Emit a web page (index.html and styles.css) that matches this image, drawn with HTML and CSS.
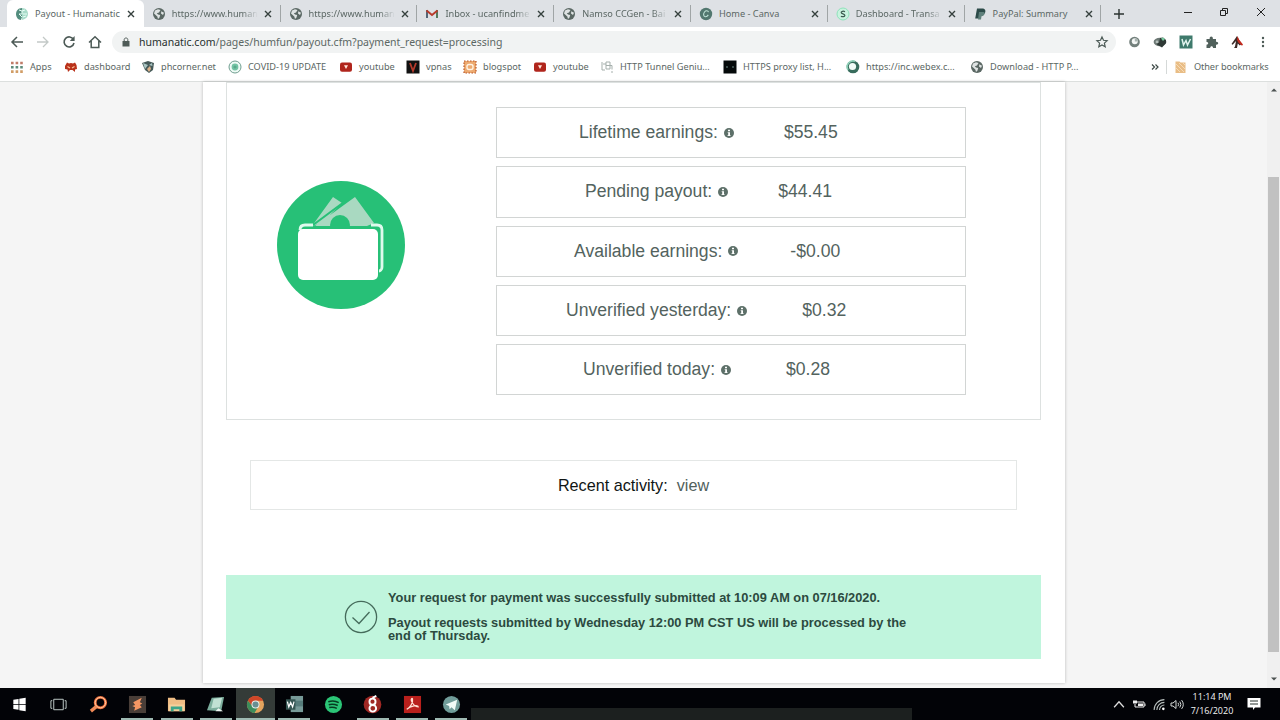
FILE: index.html
```html
<!DOCTYPE html>
<html lang="en">
<head>
    <meta charset="UTF-8">
    <meta name="viewport" content="width=device-width, initial-scale=1.0">
    <title>Payout - Humanatic</title>
    <link rel="stylesheet" href="styles.css">
</head>
<body>
    <svg class="symbols">
        <symbol id="globe" viewBox="0 0 14 14"><circle cx="7" cy="7" r="6" fill="#5b6864"/><path d="M3 3.5 6 2.2 8.5 3 7 5.5 4.8 6.3 6 7.5 8.2 8 7.5 10.5 6 12 5.3 9.5 2 6.5zM9.3 4.2 12 5.8 11 8 9 6.5z" fill="#dfe3e3"/></symbol>
        <symbol id="youtube" viewBox="0 0 14 14"><rect x="1" y="2.4" width="12" height="9.4" rx="2" fill="#b0251c"/><path d="M5 5.300h4L7 9z" fill="#ffe7dc"/></symbol>
        <symbol id="close" viewBox="0 0 10 10"><path d="M2 2 8 8M8 2 2 8" stroke="#35403d" stroke-width="1.4"/></symbol>
        <symbol id="info" viewBox="0 0 10 10"><circle cx="5" cy="5" r="5" fill="#5d7069"/><path d="M4 1.800h2v1.400H4zM3.700 4.200H6v3h.6V8H3.500v-.8h.7V5h-.5z" fill="#fff"/></symbol>
    </svg>
    <div class="tabs">
        <div class="tab active">
            <svg class="icon" viewBox="0 0 14 14"><path d="M7 1C3 1 1 4 1 7s2 6 5 6l1-3z" fill="#538d7e"/><path d="M7 1c4 0 6 3 6 6s-2 5-6 6z" fill="#a9dbc9"/><path d="M4 3l3 1v3H4l3 3M7 4l3-1M8 7h4M8 10l3-1" fill="none" stroke="#e8fff6"/></svg>
            <span class="title">Payout - Humanatic</span>
            <svg class="close"><use href="#close"/></svg>
        </div>
        <div class="tab">
            <svg class="icon"><use href="#globe"/></svg>
            <span class="title fade">https://www.human</span>
            <svg class="close"><use href="#close"/></svg>
        </div>
        <div class="tab">
            <svg class="icon"><use href="#globe"/></svg>
            <span class="title fade">https://www.human</span>
            <svg class="close"><use href="#close"/></svg>
        </div>
        <div class="tab">
            <svg class="icon" viewBox="0 0 14 14"><path d="M1 3h2v8H1z" fill="#567"/><path d="M11 3h2v8h-2z" fill="#567a5c"/><path d="M1.500 3.500 7 8l5.500-4.500" fill="none" stroke="#b93c2c" stroke-width="2"/></svg>
            <span class="title fade">Inbox - ucanfindme</span>
            <svg class="close"><use href="#close"/></svg>
        </div>
        <div class="tab">
            <svg class="icon"><use href="#globe"/></svg>
            <span class="title fade">Namso CCGen - Bai</span>
            <svg class="close"><use href="#close"/></svg>
        </div>
        <div class="tab">
            <svg class="icon" viewBox="0 0 14 14"><circle cx="7" cy="7" r="6.200" fill="#52776f"/><path d="M9.500 5.200C9 3.500 6.800 3.300 5.500 5c-1.400 1.900-1.200 4.600.8 4.700 1.300.1 2.400-.8 3-1.800" fill="none" stroke="#bfe3d7" stroke-width="1.100"/></svg>
            <span class="title">Home - Canva</span>
            <svg class="close"><use href="#close"/></svg>
        </div>
        <div class="tab">
            <svg class="icon" viewBox="0 0 14 14"><circle cx="7" cy="7" r="6" fill="#c9f3df" stroke="#8fe3bb"/><path d="M9 4.700C7.500 3.800 5 4.200 5.200 5.600 5.400 7 8.900 6.700 8.900 8.400 8.800 9.900 6.300 10 4.900 9.200" fill="none" stroke="#3c5c50" stroke-width="1.200"/></svg>
            <span class="title fade">Dashboard - Transa</span>
            <svg class="close"><use href="#close"/></svg>
        </div>
        <div class="tab">
            <svg class="icon" viewBox="0 0 14 14"><path d="M4 1.500h5c3 0 4 2 3 4.200S9.500 8.500 7.500 8.500L7 11.500H2.200z" fill="#2c4b49"/><path d="M6 5h4.500c2 0 1.500 4-2 4.300L8 12.500H5z" fill="#5f807b"/></svg>
            <span class="title">PayPal: Summary</span>
            <svg class="close"><use href="#close"/></svg>
        </div>
        <svg class="plus" viewBox="0 0 12 12"><path d="M6 1v10M1 6h10" stroke="#2b3331" stroke-width="1.400"/></svg>
        <div class="window-buttons">
            <svg viewBox="0 0 10 10"><path d="M1 5.500h8" stroke="#222"/></svg>
            <svg viewBox="0 0 10 10"><path d="M1.500 3.500h5v5h-5zM3.500 3.500v-2h5v5h-2" fill="none" stroke="#222"/></svg>
            <svg viewBox="0 0 10 10"><path d="M1 1 9 9M9 1 1 9" stroke="#222"/></svg>
        </div>
    </div>

    <div class="toolbar">
        <div class="nav">
            <svg viewBox="0 0 14 14"><path d="M13 7H2M7 2 2 7l5 5" fill="none" stroke="#4c5a56" stroke-width="1.500"/></svg>
            <svg viewBox="0 0 14 14"><path d="M1 7h11M7 2l5 5-5 5" fill="none" stroke="#c3c9c7" stroke-width="1.300"/></svg>
            <svg viewBox="0 0 14 14"><path d="M11.500 4.500A5 5 0 1 0 12 8" fill="none" stroke="#4c5a56" stroke-width="1.600"/><path d="M12.600 1v5H7.800z" fill="#4c5a56"/></svg>
            <svg viewBox="0 0 14 14"><path d="M1 7.500 7 1.700l6 5.800M3.200 6v6.500h7.600V6" fill="none" stroke="#4c5a56" stroke-width="1.500"/></svg>
        </div>
        <div class="address">
            <svg class="lock" viewBox="0 0 8 10"><path d="M.5 4h7v5.500h-7z" fill="#505c58"/><path d="M2.200 4V2.500c0-2 3.600-2 3.600 0V4" fill="none" stroke="#505c58"/></svg>
            <span class="url"><b>humanatic.com</b>/pages/humfun/payout.cfm?payment_request=processing</span>
            <svg class="star" viewBox="0 0 14 14"><path d="m7 2 1.500 3.300 3.600.4-2.700 2.400.8 3.600L7 9.900l-3.200 1.800.8-3.600-2.700-2.400 3.600-.4z" fill="none" stroke="#4c5a56" stroke-width="1.200"/></svg>
        </div>
        <div class="extensions">
            <svg viewBox="0 0 14 14"><circle cx="6.500" cy="7" r="5.300" fill="#73807c"/><circle cx="6.800" cy="6.300" r="3" fill="#f4f6f5"/><path d="M6.800 6.500V3.500a3 3 0 0 1 3 3z" fill="#a9b4b0"/></svg>
            <svg viewBox="0 0 14 14"><ellipse cx="7" cy="7" rx="6.400" ry="4.200" fill="#6d7975"/><path d="M3 7 6 8l1-5 3-.5 3 2.500v3l-4 4.500-5-3z" fill="#2f3936"/><path d="m8 3.500 2-1 2 1.500-2 2z" fill="#77c99e"/><circle cx="4" cy="7" r="1.400" fill="#b5bfbb"/></svg>
            <svg viewBox="0 0 14 14"><path d="M.5.500h13v13H.5z" fill="#3f7a6c"/><path d="M3 4l1.500 6L7 5.500 8.500 10 11.500 4" fill="none" stroke="#e2f4ee" stroke-width="1.500"/></svg>
            <svg viewBox="0 0 14 14"><path d="M1.500 4h3.200c-.7-3.200 3.600-3.400 3.200 0H11v2.800c3-.3 2.900 3.200 0 2.900V13H8c.2-2.300-2.900-2.300-2.800 0H1.500V9.800c2.300 0 2.300-2.700 0-2.700z" fill="#51615c"/></svg>
            <svg viewBox="0 0 14 14"><path d="M7 1 5 4 1.500 9l1.200.7L6 6l-1 5.500-1 1.500h3l.8-4.500 2 2L11.500 9l-3-5z" fill="#3b2a27"/><path d="m7.500 1 1.500 3.500 4 5-1 1.200-3.500-3L7 5z" fill="#c4291d"/></svg>
            <svg viewBox="0 0 14 14"><g fill="#4c5a56"><circle cx="7" cy="3" r="1.200"/><circle cx="7" cy="7" r="1.200"/><circle cx="7" cy="11" r="1.200"/></g></svg>
        </div>
    </div>

    <div class="bookmarks">
        <div class="bookmark apps"><svg class="icon" viewBox="0 0 14 14"><path d="M1 3h12" stroke="#c07c69" stroke-width="2.600" stroke-dasharray="2.600 2"/><path d="M1 7.300h12" stroke="#5d8c7c" stroke-width="2.600" stroke-dasharray="2.600 2"/><path d="M1 11.600h12" stroke="#d19d66" stroke-width="2.600" stroke-dasharray="2.600 2"/></svg><span>Apps</span></div>
        <div class="bookmark dash"><svg class="icon" viewBox="0 0 14 14"><path d="M1 6 3 2.500l2 1L7 3l2 .500 2-1L12.500 5l.5 4-2 .500V12l-2.500-2H6l-2 2-.5-2.500L1 9z" fill="#ba321b"/><path d="M3.500 6.500 6 8M10.500 6.500 8 8" stroke="#ffc49b" stroke-width="1.100"/></svg><span>dashboard</span></div>
        <div class="bookmark phc"><svg class="icon" viewBox="0 0 14 14"><path d="M1 3 7 1l6 2-1 7-4 3-4-3z" fill="#465a59"/><path d="m2 3 5 2-3 4zM8 5l3-2 .5 3z" fill="#a9c5c3"/><path d="M6 9l3-3 1 3-2 3z" fill="#ddb28a"/></svg><span>phcorner.net</span></div>
        <div class="bookmark covid"><svg class="icon" viewBox="0 0 14 14"><circle cx="7" cy="7" r="6" fill="#effbf6" stroke="#709e90"/><circle cx="7" cy="7" r="3.400" fill="#73c4a4"/><circle cx="7" cy="7" r="1.600" fill="#58a88b"/></svg><span>COVID-19 UPDATE</span></div>
        <div class="bookmark yt"><svg class="icon"><use href="#youtube"/></svg><span>youtube</span></div>
        <div class="bookmark vpnas"><svg class="icon" viewBox="0 0 14 14"><path d="M.5.500h13v13H.5z" fill="#111"/><path d="m4 3 3 8 3-8" fill="none" stroke="#b53a2b" stroke-width="1.800"/></svg><span>vpnas</span></div>
        <div class="bookmark blog"><svg class="icon" viewBox="0 0 14 14"><rect x="1" y="1" width="12" height="12" fill="#edaa70"/><rect x="1" y="1" width="12" height="12" fill="none" stroke="#b95526" stroke-width="1.200" stroke-dasharray="1.500 1.500"/><rect x="4" y="4.500" width="6" height="5" rx="2" fill="none" stroke="#fff3e5" stroke-width="1.400"/></svg><span>blogspot</span></div>
        <div class="bookmark yt"><svg class="icon"><use href="#youtube"/></svg><span>youtube</span></div>
        <div class="bookmark tunnel"><svg class="icon" viewBox="0 0 14 14"><path d="M2 2v8h3M6 2h4v7H6zM6 5.500h6v4M3 4h3M12 11v2" fill="none" stroke="#a5afac"/></svg><span>HTTP Tunnel Geniu...</span></div>
        <div class="bookmark proxy"><svg class="icon" viewBox="0 0 14 14"><path d="M.5.500h13v13H.5z" fill="#05090a"/><path d="M3 7h2M9 7h2" stroke="#6c8b87"/></svg><span>HTTPS proxy list, H...</span></div>
        <div class="bookmark webex"><svg class="icon" viewBox="0 0 14 14"><circle cx="7" cy="7" r="6.300" fill="#376c5c"/><path d="M2 10A6 6 0 0 1 9 1.200" fill="none" stroke="#8fd0b8" stroke-width="1.600"/><circle cx="6.500" cy="6.500" r="3.600" fill="#f1fbf7"/></svg><span>https://inc.webex.c...</span></div>
        <div class="bookmark download"><svg class="icon"><use href="#globe"/></svg><span>Download - HTTP P...</span></div>
        <svg class="more" viewBox="0 0 8 8"><path d="m1 1.500 2.500 2.500L1 6.500M4.500 1.500 7 4 4.500 6.500" fill="none" stroke="#3d4946" stroke-width="1.200"/></svg>
        <div class="bookmark other"><svg class="icon" viewBox="0 0 14 14"><path d="M1.500 1.500h4l1 1h5V13h-10z" fill="#e9bd85"/><path d="m2 4 8 8M2 8l4 4M5 3l6 6M9 3l2 2" stroke="#f6dbb8"/></svg><span>Other bookmarks</span></div>
    </div>

    <div class="viewport">
        <div class="sheet">
            <div class="earnings">
                <svg class="wallet" viewBox="0 0 128 128">
                    <circle cx="64" cy="64" r="64" fill="#27c077"/>
                    <path d="M35 45 56 16l9 6-20 20zM38 45 78 16l19 26-7 3z" fill="#a9d9c1"/>
                    <path d="M36 44 67 21" stroke="#27c077" stroke-width="2"/>
                    <circle cx="63" cy="44" r="10" fill="#27c077"/>
                    <path d="M23 49c0-4 2-5 5-5h8M94 44h6c4 0 5 2 5 5v37c0 3-2 4-3 4" fill="none" stroke="#dffaed" stroke-width="2.800"/>
                    <rect x="21" y="48" width="80" height="51" rx="5" fill="#fff"/>
                </svg>
                <div class="rows">
                    <div class="row lifetime"><span>Lifetime earnings:</span><svg><use href="#info"/></svg><span class="amount">$55.45</span></div>
                    <div class="row pending"><span>Pending payout:</span><svg><use href="#info"/></svg><span class="amount">$44.41</span></div>
                    <div class="row available"><span>Available earnings:</span><svg><use href="#info"/></svg><span class="amount">-$0.00</span></div>
                    <div class="row yesterday"><span>Unverified yesterday:</span><svg><use href="#info"/></svg><span class="amount">$0.32</span></div>
                    <div class="row today"><span>Unverified today:</span><svg><use href="#info"/></svg><span class="amount">$0.28</span></div>
                </div>
            </div>
            <div class="activity">Recent activity:<a>view</a></div>
            <div class="notice">
                <svg viewBox="0 0 34 34"><circle cx="17" cy="17" r="15.600" fill="none" stroke="#456b5b" stroke-width="1.300"/><path d="m8.500 17.500 6.500 6L25.500 12" fill="none" stroke="#456b5b" stroke-width="1.300"/></svg>
                <div>
                    <p class="first">Your request for payment was successfully submitted at 10:09 AM on 07/16/2020.</p>
                    <p class="second">Payout requests submitted by Wednesday 12:00 PM CST US will be processed by the<br>end of Thursday.</p>
                </div>
            </div>
        </div>
        <div class="scrollbar">
            <svg viewBox="0 0 8 6"><path d="M1 4.500 4 1.500l3 3z" fill="#4b5150"/></svg>
            <div class="thumb"></div>
            <svg viewBox="0 0 8 6"><path d="M1 1.500h6l-3 3z" fill="#4b5150"/></svg>
        </div>
    </div>

    <div class="taskbar">
        <div class="app"><svg viewBox="0 0 20 20"><path d="m3.500 5 5.500-.8v5.300H3.500zM9.800 4 16.500 3v6.500H9.800zM3.500 10.300H9v5.300l-5.500-.8zM9.800 10.300h6.700V17l-6.700-1z" fill="#fff"/></svg></div>
        <div class="app"><svg viewBox="0 0 20 20"><path d="M5 4.500h10v11H5zM3.500 6H2v8h1.500M16.500 6H18v8h-1.500" fill="none" stroke="#c5d1ce"/></svg></div>
        <div class="app"><svg viewBox="0 0 20 20"><circle cx="12" cy="8" r="5.500" fill="none" stroke="#ef7040" stroke-width="3"/><path d="m8 12-6 5" stroke="#f18a57" stroke-width="3.500"/><circle cx="12" cy="8" r="5.500" fill="none" stroke="#ffd0a0"/></svg></div>
        <div class="app open"><svg viewBox="0 0 20 20"><path d="M1 1h18v18H1z" fill="#493e38"/><path d="m14.500 3-9 4.500 2 3-3 1 3 1.500-1 3.500 8-3.500-2-2.500 2.500-1.500-2.500-1.500z" fill="#f59663"/></svg></div>
        <div class="app open"><svg viewBox="0 0 20 20"><path d="M1 3h7l1.500 2H19v12H1z" fill="#efbd85"/><path d="M2 10h16v7H2z" fill="#f5d09c"/><path d="M4 17v-5h12v5h-3v-2H7v2z" fill="#3ba58a"/></svg></div>
        <div class="app open"><svg viewBox="0 0 20 20"><path d="M6 3 19 2l-3 15-15-1z" fill="#7cae9d"/><path d="m8 4 9-1-2.500 10-9 1z" fill="#c1e1d4"/><path d="m13 14 5 3h-8z" fill="#f1f7f4"/></svg></div>
        <div class="app open current"><svg viewBox="0 0 20 20"><circle cx="10" cy="10" r="9" fill="#e3a45e"/><path d="M2 6a9 9 0 0 1 16 0h-8L7 12z" fill="#d04628"/><path d="M2 6a9 9 0 0 0 7 13l4-7H7z" fill="#3c8d5b"/><circle cx="10" cy="10" r="4.200" fill="#e8efeb"/><circle cx="10" cy="10" r="3.200" fill="#688f91"/></svg></div>
        <div class="app open"><svg viewBox="0 0 20 20"><path d="M6 1h13v17H6z" fill="#779a98"/><path d="M6 6h13v6H6z" fill="#567c7b"/><path d="M1 4.500h10v11H1z" fill="#355653"/><path d="m2.500 7 1.500 5.500L6 8l2 4.500L9.500 7" fill="none" stroke="#fff" stroke-width="1.300"/></svg></div>
        <div class="app"><svg viewBox="0 0 20 20"><circle cx="10" cy="10" r="9" fill="#2bc576"/><path d="M4.500 7c4-1.200 8-.8 11 1M5 10.200c3.500-1 6.500-.5 9.500.9M5.500 13.200c3-.7 5.500-.4 8 .9" fill="none" stroke="#063b21" stroke-width="1.600"/></svg></div>
        <div class="app open"><svg viewBox="0 0 20 20"><circle cx="10" cy="10" r="9.300" fill="#9f2824"/><circle cx="10" cy="7" r="3.200" fill="none" stroke="#fff" stroke-width="2"/><circle cx="10.300" cy="14" r="3.500" fill="none" stroke="#fff" stroke-width="2"/><path d="M10 3 14 1" stroke="#fff" stroke-width="2"/></svg></div>
        <div class="app open"><svg viewBox="0 0 20 20"><path d="M1 1h18v18H1z" fill="#b9201c"/><path d="M4 15c3-1 7-7 6-11-.5-1-2 0-1 2.500 1 3 4 6 7 6 0-2.500-8-1-12 2.500z" fill="none" stroke="#ffdfd2" stroke-width="1.300"/></svg></div>
        <div class="app open"><svg viewBox="0 0 20 20"><circle cx="10" cy="10" r="9" fill="#719d9a"/><path d="m4 10 12-5-2.500 11-3.500-3-2 2-.5-3.500z" fill="#f1fbf8"/></svg></div>
        <div class="shade"></div>
        <div class="tray">
            <svg class="chevron" viewBox="0 0 12 12"><path d="m1.500 8.500 4.500-5 4.500 5" fill="none" stroke="#ddd" stroke-width="1.200"/></svg>
            <svg class="battery" viewBox="0 0 14 12"><path d="M5 3.500h7v5H3v-3" fill="none" stroke="#eee"/><path d="M6 5h5v2.500H6zM12.500 5h1v2.500h-1zM1 2h4v3H1z" fill="#eee"/></svg>
            <svg class="wifi" viewBox="0 0 12 12"><path d="M1.500 11A9.500 9.500 0 0 1 11 1.500M4 11a7 7 0 0 1 7-7M6.500 11A4.500 4.500 0 0 1 11 6.500" fill="none" stroke="#b7bfbd"/><circle cx="10" cy="10" r="1.200" fill="#fff"/></svg>
            <svg class="sound" viewBox="0 0 14 12"><path d="M1 4.500h2L6 2v8L3 7.500H1zM8 4.300q1.300 1.700 0 3.400M9.800 3q2.200 3 0 6M11.600 1.600q3.400 4.400 0 8.800" fill="none" stroke="#d5dad8"/></svg>
            <div class="clock"><div class="time">11:14 PM</div><div>7/16/2020</div></div>
            <svg class="action" viewBox="0 0 14 14"><path d="M.5 1h13v9.500H8L6 13v-2.500H.5z" fill="#fff"/><path d="M3 4h8M3 7h8" stroke="#26302d"/></svg>
        </div>
    </div>
</body>
</html>
```

FILE: styles.css
```css
* {
    box-sizing: border-box;
}
body {
    margin: 0;
    width: 1280px;
    height: 720px;
    overflow: hidden;
    display: flex;
    flex-direction: column;
    font-family: "Noto Sans", "Open Sans", sans-serif;
    font-size: 9.2px;
    color: #5b6764;
    background: #fff;
}
svg {
    display: block;
    flex: none;
}
.symbols {
    display: none;
}
.icon {
    width: 14px;
    height: 14px;
}

/* Tab strip */
.tabs {
    display: flex;
    height: 27px;
    padding-left: 7px;
    background: #dee1e5;
}
.tab {
    display: flex;
    align-items: center;
    width: 136.8px;
    padding-left: 8px;
    border-right: 1px solid #a3a8a9;
    border-image: linear-gradient(transparent 22%, #a0a5a6 22%, #a0a5a6 78%, transparent 78%) 1;
}
.tab.active {
    background: #fff;
    border: 0;
    border-radius: 6px 6px 0 0;
}
.title {
    width: 86px;
    margin-left: 6px;
    white-space: nowrap;
}
.fade {
    -webkit-mask-image: linear-gradient(90deg, #000 82%, transparent 100%);
}
.close {
    width: 10px;
    height: 10px;
    margin-left: 5px;
}
.plus {
    width: 12px;
    height: 12px;
    margin: 8px 0 0 12px;
}
.window-buttons {
    display: flex;
    gap: 26.7px;
    margin: 7px 14px 0 auto;
}
.window-buttons svg {
    width: 10px;
    height: 10px;
}

/* Address bar */
.toolbar {
    display: flex;
    align-items: center;
    height: 29px;
    padding: 0 10px;
}
.nav {
    display: flex;
    gap: 12px;
    width: 102px;
}
.nav svg {
    width: 14px;
    height: 14px;
}
.address {
    display: flex;
    align-items: center;
    width: 1004px;
    height: 22px;
    padding: 0 7px 0 10px;
    border-radius: 11px;
    background: #f1f3f3;
}
.lock {
    width: 8px;
    height: 10px;
}
.url {
    margin-left: 9px;
    font-size: 10.5px;
}
.url b {
    font-weight: normal;
    color: #27312e;
}
.star {
    width: 14px;
    height: 14px;
    margin-left: auto;
}
.extensions {
    display: flex;
    gap: 11.7px;
    margin-left: 12px;
}
.extensions svg {
    width: 14px;
    height: 14px;
}

/* Bookmarks bar */
.bookmarks {
    display: flex;
    align-items: center;
    height: 26px;
    padding: 0 0 4px 10px;
    border-bottom: 1px solid #dcdfde;
}
.bookmark {
    display: flex;
    gap: 6px;
    align-items: center;
    white-space: nowrap;
}
.apps { width: 54px; }
.dash { width: 77px; }
.phc { width: 87px; }
.covid { width: 111px; }
.yt { width: 67px; }
.vpnas { width: 57px; }
.blog { width: 70px; }
.tunnel { width: 123px; }
.proxy { width: 123px; }
.webex { width: 124px; }
.download { width: 181px; }
.more {
    width: 8px;
    height: 8px;
}
.other {
    margin-left: 7px;
    padding-left: 7px;
    border-left: 1px solid #d5d9d8;
    letter-spacing: -0.1px;
}

/* Page */
.viewport {
    display: flex;
    height: 606px;
    background: #f5f5f5;
    font-family: "Liberation Sans", Arial, sans-serif;
}
.sheet {
    width: 862px;
    height: 601px;
    margin-left: 203px;
    padding: 0 24px 0 23px;
    background: #fff;
    box-shadow: 0 0 3px rgba(0, 0, 0, 0.25);
}
.earnings {
    display: flex;
    height: 338px;
    border: 1px solid #dde1e0;
}
.wallet {
    width: 128px;
    height: 128px;
    margin: 98px 0 0 50px;
}
.rows {
    display: flex;
    flex-direction: column;
    gap: 8px;
    width: 470px;
    margin: 24px 0 0 91px;
}
.row {
    display: flex;
    align-items: center;
    height: 51.3px;
    border: 1px solid #d2d5d4;
    font-size: 17.6px;
    color: #53635e;
    white-space: nowrap;
}
.row svg {
    width: 10px;
    height: 10px;
    margin-left: 6px;
}
.amount {
    margin-left: 50px;
}
.lifetime { padding-left: 82px; }
.pending { padding-left: 88px; }
.available { padding-left: 77px; }
.yesterday { padding-left: 69px; }
.today { padding-left: 86px; }
.available .amount {
    margin-left: 52px;
}
.yesterday .amount,
.today .amount {
    margin-left: 55px;
}
.activity {
    display: flex;
    align-items: center;
    justify-content: center;
    gap: 9px;
    height: 50px;
    margin: 40px 24px 0;
    border: 1px solid #e4e7e6;
    font-size: 16.2px;
    color: #101514;
}
.activity a {
    color: #51615c;
}
.notice {
    display: flex;
    height: 84px;
    margin-top: 65px;
    padding-left: 118px;
    background: #c0f5dd;
    font-size: 12.8px;
    font-weight: bold;
    line-height: 13px;
    color: #2c4a3f;
    white-space: nowrap;
}
.notice svg {
    width: 34px;
    height: 34px;
    margin: 25px 10px 0 0;
}
.notice p {
    margin: 0;
}
.notice .first {
    margin: 16px 0 12px;
}
.scrollbar {
    display: flex;
    flex-direction: column;
    align-items: center;
    width: 13px;
    margin-left: auto;
    background: #f0f0f0;
}
.scrollbar svg {
    width: 8px;
    height: 6px;
    margin-top: 5px;
}
.thumb {
    width: 11px;
    height: 475px;
    margin: 84px 0 19px;
    background: #c1c1c1;
}

/* Taskbar */
.taskbar {
    display: flex;
    height: 32px;
    background: #020307;
    font-family: "Open Sans", "Noto Sans", sans-serif;
    color: #f2f4f4;
}
.app {
    display: flex;
    align-items: center;
    justify-content: center;
    width: 39.25px;
    background: linear-gradient(#9eb9b2, #9eb9b2) center bottom / 0 2px no-repeat;
}
.app svg {
    width: 19px;
    height: 19px;
}
.app.open {
    background-size: 32px 2px;
}
.app.current {
    background-color: #343b38;
    background-size: 100% 2px;
}
.shade {
    width: 441px;
    height: 12px;
    align-self: flex-end;
    background: #1c201f;
}
.tray {
    display: flex;
    align-items: center;
    margin-left: auto;
}
.tray svg {
    width: 14px;
    height: 13px;
}
.tray .battery { margin-left: 6px; }
.tray .wifi { margin-left: 6px; }
.tray .sound { margin-left: 4px; }
.clock {
    width: 46px;
    margin-left: 5px;
    text-align: center;
    font-size: 9px;
    line-height: 14px;
    white-space: nowrap;
}
.tray .action {
    width: 14px;
    height: 14px;
    margin: 0 19px 0 12px;
}
```
